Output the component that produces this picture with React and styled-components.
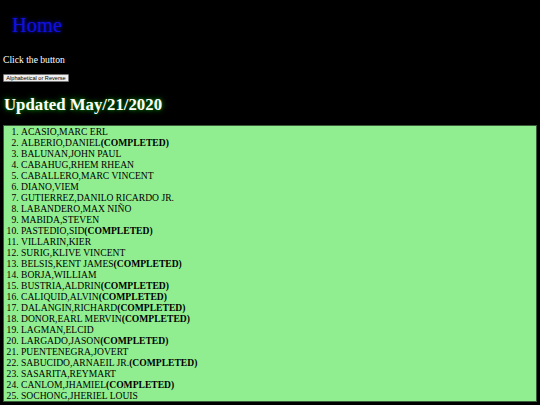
import React from "react";
import styled, { createGlobalStyle } from "styled-components";

const Global = createGlobalStyle`
  html, body {
    margin: 0;
    padding: 0;
    background: #000;
    color: #fff;
    font-family: "Liberation Serif", "Times New Roman", serif;
  }
`;

const Page = styled.div`
  display: flex;
  flex-direction: column;
  align-items: flex-start;
  padding-bottom: 4px;
`;

const Nav = styled.nav`
  margin-top: 14px;
  padding-left: 12px;
`;

const HomeLink = styled.a`
  font-size: 20.5px;
  color: #1010dd;
  text-decoration: none;
  text-shadow: 0 0 3px rgba(20, 20, 200, 0.9), 0 0 6px rgba(0, 0, 160, 0.6);
  line-height: 22px;
  display: block;
`;

const Prompt = styled.p`
  margin: 18px 0 0 3px;
  font-size: 9.6px;
  line-height: 11px;
`;

const SortButton = styled.button`
  margin: 9px 0 0 3px;
  height: 8px;
  width: 66px;
  padding: 0;
  font-family: "Liberation Sans", Arial, sans-serif;
  font-size: 5.6px;
  line-height: 6px;
  color: #000;
  background: #efefef;
  border: 1px solid #767676;
  border-radius: 1px;
`;

const Heading = styled.h2`
  margin: 13px 0 0 4px;
  font-size: 16.8px;
  line-height: 19px;
  font-weight: bold;
  color: #fff;
  text-shadow: 0 0 3px #0c7a0c, 0 0 6px #0a5a0a, 0 0 8px #063e06;
`;

const List = styled.ol`
  align-self: stretch;
  margin: 11px 3px 0 3px;
  padding: 0 0 0 17px;
  background: #90ee90;
  border: 1px solid #3a5a3a;
  color: #000;
  font-size: 9.6px;
  line-height: 11px;
`;

const Item = styled.li``;

const Done = styled.b`
  font-weight: bold;
`;

const students = [
  ["ACASIO,MARC ERL", false],
  ["ALBERIO,DANIEL", true],
  ["BALUNAN,JOHN PAUL", false],
  ["CABAHUG,RHEM RHEAN", false],
  ["CABALLERO,MARC VINCENT", false],
  ["DIANO,VIEM", false],
  ["GUTIERREZ,DANILO RICARDO JR.", false],
  ["LABANDERO,MAX NIÑO", false],
  ["MABIDA,STEVEN", false],
  ["PASTEDIO,SID", true],
  ["VILLARIN,KIER", false],
  ["SURIG,KLIVE VINCENT", false],
  ["BELSIS,KENT JAMES", true],
  ["BORJA,WILLIAM", false],
  ["BUSTRIA,ALDRIN", true],
  ["CALIQUID,ALVIN", true],
  ["DALANGIN,RICHARD", true],
  ["DONOR,EARL MERVIN", true],
  ["LAGMAN,ELCID", false],
  ["LARGADO,JASON", true],
  ["PUENTENEGRA,JOVERT", false],
  ["SABUCIDO,ARNAEIL JR.", true],
  ["SASARITA,REYMART", false],
  ["CANLOM,JHAMIEL", true],
  ["SOCHONG,JHERIEL LOUIS", false],
];

export default function App() {
  return (
    <>
      <Global />
      <Page>
        <Nav>
          <HomeLink href="#">Home</HomeLink>
        </Nav>
        <Prompt>Click the button</Prompt>
        <SortButton>Alphabetical or Reverse</SortButton>
        <Heading>Updated May/21/2020</Heading>
        <List>
          {students.map(([name, done]) => (
            <Item key={name}>
              {name}
              {done && <Done>(COMPLETED)</Done>}
            </Item>
          ))}
        </List>
      </Page>
    </>
  );
}
